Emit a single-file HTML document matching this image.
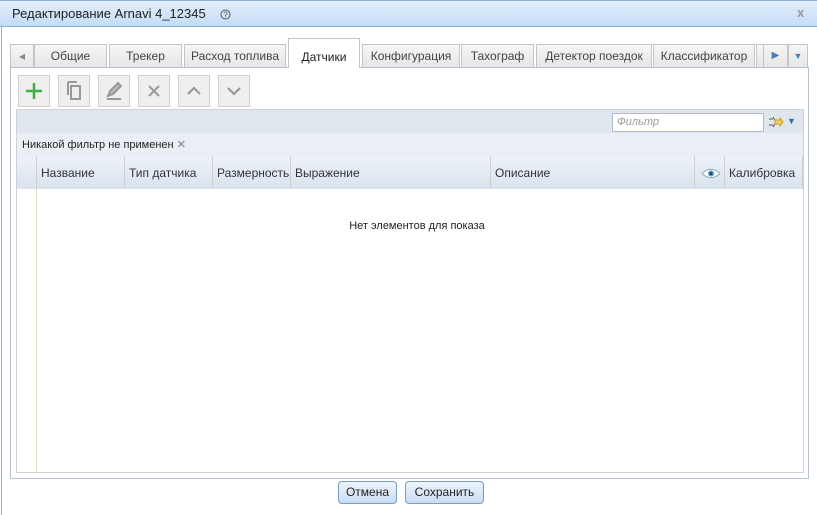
<html><head><style>
body{margin:0;width:817px;height:515px;background:#fff;font-family:"Liberation Sans",sans-serif;font-size:12px;color:#222;position:relative;overflow:hidden}
.a{position:absolute;box-sizing:border-box}
.tab{position:absolute;top:44px;height:23px;border:1px solid #c5c5c5;border-bottom:none;background:linear-gradient(#f6f6f6,#e6e6e6);text-align:center;line-height:22px;font-size:12px;color:#444;box-sizing:border-box}
.tb{position:absolute;top:75px;width:32px;height:32px;border:1px solid #d0d0d0;background:#efefef;box-sizing:border-box}
.col{position:absolute;top:156px;height:33px;line-height:35px;border-left:1px solid #d0d0d0;padding-left:4px;box-sizing:border-box;font-size:12px;color:#333}
.btn{position:absolute;top:481px;height:23px;border:1px solid #7a9cc0;border-radius:4px;background:linear-gradient(#eef5fd,#c9dcf2);text-align:center;line-height:21px;font-size:12px;box-sizing:border-box}
</style></head><body>
<div class="a" style="left:0;top:0;width:817px;height:27px;background:linear-gradient(#e3effc,#c4dcf6);border-top:1px solid #8fb0d4;border-bottom:1px solid #8fb0d4"></div>
<div class="a" style="left:12px;top:6px;font-size:13px;color:#222">Редактирование Arnavi 4_12345</div>
<svg class="a" style="left:220px;top:9px" width="11" height="11"><circle cx="5.5" cy="5.5" r="4.5" stroke="#555" fill="none"/><text x="5.5" y="8.5" font-size="8" text-anchor="middle" fill="#555" font-family="Liberation Sans">?</text></svg>
<div class="a" style="left:797px;top:5px;font-size:13px;color:#999;font-weight:bold">x</div>
<div class="a" style="left:1px;top:27px;width:1px;height:488px;background:#8fb0d4"></div>
<div class="tab" style="left:10px;width:24px;color:#888">◂</div>
<div class="tab" style="left:34px;width:73px">Общие</div>
<div class="tab" style="left:109px;width:73px">Трекер</div>
<div class="tab" style="left:184px;width:102px">Расход топлива</div>
<div class="tab" style="left:288px;top:38px;height:30px;width:72px;background:#fff;line-height:36px;z-index:2;color:#222">Датчики</div>
<div class="tab" style="left:362px;width:98px">Конфигурация</div>
<div class="tab" style="left:461px;width:73px">Тахограф</div>
<div class="tab" style="left:536px;width:116px">Детектор поездок</div>
<div class="tab" style="left:653px;width:102px">Классификатор</div>
<div class="tab" style="left:756px;width:8px"></div>
<div class="tab" style="left:763px;width:25px;color:#4a7fb5;font-size:10px">▶</div>
<div class="tab" style="left:788px;width:20px;color:#4a7fb5;font-size:9px">▼</div>
<div class="a" style="left:10px;top:67px;width:799px;height:412px;border:1px solid #b5c3d1;background:#fff"></div>
<div class="tb" style="left:18px"><svg width="30" height="30"><path d="M15 7v16M7 15h16" stroke="#3cb043" stroke-width="2.5"/></svg></div>
<div class="tb" style="left:58px"><svg width="30" height="30"><path d="M9 6h9M9 6v13" stroke="#999" stroke-width="2" fill="none"/><rect x="12" y="10" width="9" height="13" stroke="#999" stroke-width="2" fill="none"/></svg></div>
<div class="tb" style="left:98px"><svg width="30" height="30"><path d="M9 20l2-5 8-8 3 3-8 8zM8 23h14" stroke="#999" stroke-width="2" fill="#bbb"/></svg></div>
<div class="tb" style="left:138px"><svg width="30" height="30"><path d="M10 10l10 10M20 10l-10 10" stroke="#999" stroke-width="2"/></svg></div>
<div class="tb" style="left:178px"><svg width="30" height="30"><path d="M9 18l6-6 6 6" stroke="#999" stroke-width="2.2" fill="none"/></svg></div>
<div class="tb" style="left:218px"><svg width="30" height="30"><path d="M9 12l6 6 6-6" stroke="#999" stroke-width="2.2" fill="none"/></svg></div>
<div class="a" style="left:16px;top:109px;width:788px;height:364px;border:1px solid #d0d0d0;background:#fff"></div>
<div class="a" style="left:17px;top:110px;width:786px;height:23px;background:#dfe6ee"></div>
<div class="a" style="left:612px;top:113px;width:152px;height:19px;border:1px solid #b5b8c8;background:#fff;color:#999;font-style:italic;font-size:11px;padding:2px 4px">Фильтр</div>
<svg class="a" style="left:768px;top:116px" width="16" height="12"><path d="M1 3h4M1 9h4M5 1l3 5-3 5" stroke="#555" fill="none"/><path d="M7 4h5V2l3 4-3 4V8H7z" fill="#f3d25a" stroke="#c9a020"/></svg>
<div class="a" style="left:787px;top:116px;color:#3a6a9a;font-size:9px">▼</div>
<div class="a" style="left:17px;top:133px;width:786px;height:23px;background:#e9eff5"></div>
<div class="a" style="left:22px;top:138px;font-size:11px">Никакой фильтр не применен <span style="color:#999;font-weight:bold">✕</span></div>
<div class="a" style="left:17px;top:156px;width:786px;height:33px;background:linear-gradient(#edf2f8,#d9e3ee)"></div>
<div class="col" style="left:36px">Название</div>
<div class="col" style="left:124px">Тип датчика</div>
<div class="col" style="left:212px">Размерность</div>
<div class="col" style="left:290px">Выражение</div>
<div class="col" style="left:490px">Описание</div>
<div class="col" style="left:694px;width:31px;padding:0"><svg style="position:absolute;left:6px;top:12px" width="20" height="11"><path d="M1 5.5Q10 -3 19 5.5Q10 14 1 5.5z" fill="#fff" stroke="#8aa"/><circle cx="10" cy="5.5" r="3" fill="#4a90d9"/><circle cx="10" cy="5.5" r="1.3" fill="#333"/></svg></div>
<div class="col" style="left:724px">Калибровка</div>
<div class="a" style="left:802px;top:156px;width:1px;height:33px;background:#d0d0d0"></div>
<div class="a" style="left:36px;top:189px;width:1px;height:283px;background:#e8dcc8"></div>
<div class="a" style="left:0;top:220px;width:834px;text-align:center;font-size:11px">Нет элементов для показа</div>
<div class="btn" style="left:338px;width:59px">Отмена</div>
<div class="btn" style="left:405px;width:79px">Сохранить</div>
</body></html>
